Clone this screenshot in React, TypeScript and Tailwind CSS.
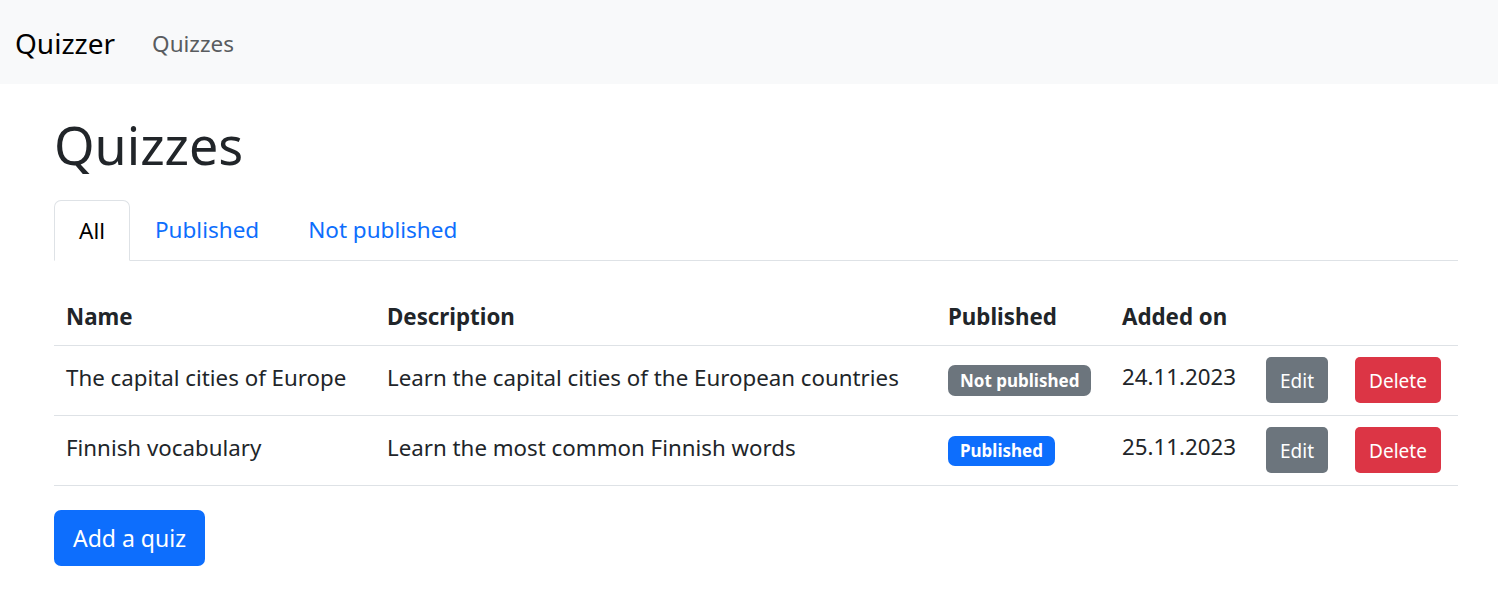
import React from "react";

const rows = [
  { name: "The capital cities of Europe", desc: "Learn the capital cities of the European countries", published: false, date: "24.11.2023" },
  { name: "Finnish vocabulary", desc: "Learn the most common Finnish words", published: true, date: "25.11.2023" },
];

export default function App() {
  return (
    <div className="min-h-[591px] bg-white text-[#212529]" style={{ fontFamily: '"Noto Sans", "Open Sans", sans-serif' }}>
      <nav className="h-[84px] bg-[#f8f9fa] flex items-center pl-[15px] pt-[2px]">
        <span className="text-[28px] text-black mr-[37px] leading-none">Quizzer</span>
        <span className="text-[22.5px] text-[#595c5f] leading-none pt-[2px]">Quizzes</span>
      </nav>
      <div className="pl-[54px] pr-[40px] pt-[30px]">
        <h1 className="text-[52px] leading-[62px] font-normal">Quizzes</h1>
        <div className="mt-[24px] flex border-b border-[#dee2e6]">
          <div className="h-[61px] px-[24px] flex items-center border border-[#dee2e6] border-b-white rounded-t-[7px] bg-white -mb-px text-black text-[22.5px]">All</div>
          <div className="h-[60px] pl-[25px] pr-[24px] flex items-center text-[#0d6efd] text-[22.5px]">Published</div>
          <div className="h-[60px] px-[25px] flex items-center text-[#0d6efd] text-[22.5px]">Not published</div>
        </div>
        <table className="mt-[28px] w-full table-fixed border-collapse text-[22.3px]">
          <thead>
            <tr className="border-b border-[#dee2e6] h-[56px]">
              <th className="w-[321px] text-left font-bold px-[12px]">Name</th>
              <th className="w-[561px] text-left font-bold px-[12px]">Description</th>
              <th className="w-[174px] text-left font-bold px-[12px]">Published</th>
              <th className="w-[144px] text-left font-bold px-[12px]">Added on</th>
              <th className="w-[89px]"></th>
              <th></th>
            </tr>
          </thead>
          <tbody>
            {rows.map((r) => (
              <tr key={r.name} className="border-b border-[#dee2e6] h-[70px]">
                <td className="px-[12px] pb-[5px] align-middle whitespace-nowrap">{r.name}</td>
                <td className="px-[12px] pb-[5px] align-middle whitespace-nowrap">{r.desc}</td>
                <td className="px-[12px] pb-[2px] align-middle">
                  {r.published ? (
                    <span className="inline-flex items-center h-[30px] px-[12px] rounded-[7px] bg-[#0d6efd] text-white font-bold text-[17px]">Published</span>
                  ) : (
                    <span className="inline-flex items-center h-[31px] px-[12px] rounded-[7px] bg-[#6c757d] text-white font-bold text-[17px]">Not published</span>
                  )}
                </td>
                <td className="px-[12px] pb-[6px] align-middle">{r.date}</td>
                <td className="px-[12px] align-middle">
                  <button className="h-[46px] w-[62px] rounded-[5px] bg-[#6c757d] text-white text-[19px] pt-[3px]">Edit</button>
                </td>
                <td className="px-[12px] align-middle">
                  <button className="h-[46px] w-[86px] rounded-[5px] bg-[#dc3545] text-white text-[19px] pt-[3px]">Delete</button>
                </td>
              </tr>
            ))}
          </tbody>
        </table>
        <button className="mt-[24px] h-[56px] w-[151px] rounded-[7px] bg-[#0d6efd] text-white text-[23px] pt-[2px]">Add a quiz</button>
      </div>
    </div>
  );
}
